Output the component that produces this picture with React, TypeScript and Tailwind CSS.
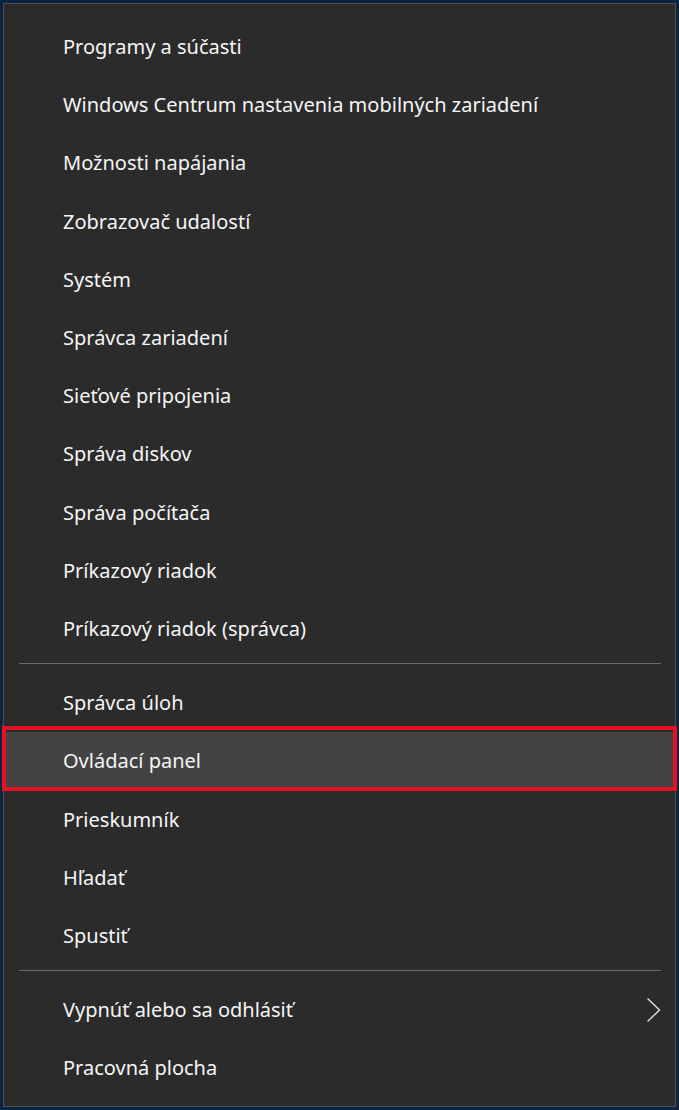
import React from "react";

const group1 = [
  "Programy a súčasti",
  "Windows Centrum nastavenia mobilných zariadení",
  "Možnosti napájania",
  "Zobrazovač udalostí",
  "Systém",
  "Správca zariadení",
  "Sieťové pripojenia",
  "Správa diskov",
  "Správa počítača",
  "Príkazový riadok",
  "Príkazový riadok (správca)",
];
const group2 = ["Správca úloh", "Ovládací panel", "Prieskumník", "Hľadať", "Spustiť"];

function Row({ label, highlighted, chevron }: { label: string; highlighted?: boolean; chevron?: boolean }) {
  return (
    <div
      className={`relative flex h-[58.2px] items-center pl-[59px] pr-[13px] ${highlighted ? "bg-[#434343]" : ""}`}
    >
      <span className="flex-1 text-[20px] leading-none text-[#f5f5f5]">{label}</span>
      {chevron && (
        <svg width="16" height="26" viewBox="0 0 16 26">
          <path d="M1.5 1.5 L13.5 13 L1.5 24.5" fill="none" stroke="#e8e8e8" strokeWidth="1.3" />
        </svg>
      )}
      {highlighted && (
        <div className="pointer-events-none absolute -left-[2px] -right-[2px] -top-[6px] -bottom-[1px] border-[4px] border-[#e81123]" />
      )}
    </div>
  );
}

function Sep() {
  return (
    <div className="flex h-[16px] items-start pt-[5px] pl-[15px] pr-[14px]">
      <div className="h-px w-full bg-[#6b6b6b]" />
    </div>
  );
}

export default function App() {
  return (
    <div
      className="h-[1110px] w-[679px] overflow-hidden bg-[#0b2440] pl-[3px] pt-[3px]"
      style={{ fontFamily: '"Segoe UI", "Noto Sans", "Open Sans", sans-serif' }}
    >
      <div className="h-[1104px] w-[673px] border border-[#4f4f4f] bg-[#2b2b2b] pt-[14px]">
        {group1.map((l) => (
          <Row key={l} label={l} />
        ))}
        <Sep />
        {group2.map((l) => (
          <Row key={l} label={l} highlighted={l === "Ovládací panel"} />
        ))}
        <Sep />
        <Row label="Vypnúť alebo sa odhlásiť" chevron />
        <Row label="Pracovná plocha" />
      </div>
    </div>
  );
}
